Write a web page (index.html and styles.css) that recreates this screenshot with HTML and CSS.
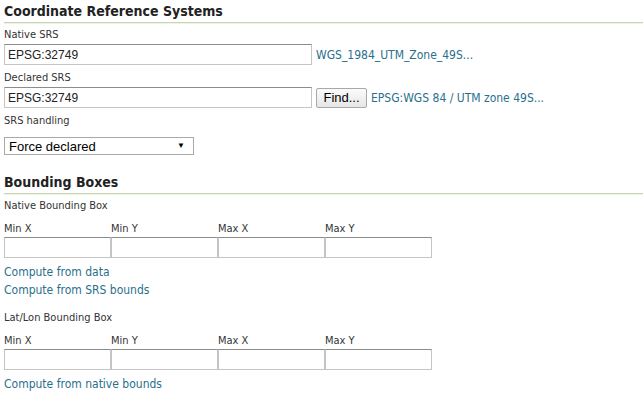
FILE: index.html
```html
<!DOCTYPE html>
<html>
<head>
<meta charset="utf-8">
<link rel="stylesheet" href="styles.css">
</head>
<body>
<section class="section">
  <h2 class="heading">Coordinate Reference Systems</h2>
  <div class="field">
    <label class="label">Native SRS</label>
    <div class="row">
      <input class="text srs" type="text" value="EPSG:32749">
      <a class="link" href="#">WGS_1984_UTM_Zone_49S...</a>
    </div>
  </div>
  <div class="field">
    <label class="label">Declared SRS</label>
    <div class="row">
      <input class="text srs" type="text" value="EPSG:32749">
      <button class="btn" type="button">Find...</button>
      <a class="link" href="#">EPSG:WGS 84 / UTM zone 49S...</a>
    </div>
  </div>
  <div class="field">
    <label class="label">SRS handling</label>
    <div class="select"><span>Force declared</span><span class="arrow">▼</span></div>
  </div>
</section>
<section class="section bb">
  <h2 class="heading">Bounding Boxes</h2>
  <div class="field">
    <label class="label">Native Bounding Box</label>
    <div class="grid">
      <span class="label cell">Min X</span><span class="label cell">Min Y</span><span class="label cell">Max X</span><span class="label cell">Max Y</span>
      <input class="text box" type="text"><input class="text box" type="text"><input class="text box" type="text"><input class="text box" type="text">
    </div>
    <div class="links">
      <a class="link" href="#">Compute from data</a>
      <a class="link" href="#">Compute from SRS bounds</a>
    </div>
  </div>
  <div class="field ll">
    <label class="label">Lat/Lon Bounding Box</label>
    <div class="grid">
      <span class="label cell">Min X</span><span class="label cell">Min Y</span><span class="label cell">Max X</span><span class="label cell">Max Y</span>
      <input class="text box" type="text"><input class="text box" type="text"><input class="text box" type="text"><input class="text box" type="text">
    </div>
    <div class="links">
      <a class="link" href="#">Compute from native bounds</a>
    </div>
  </div>
</section>
</body>
</html>
```
FILE: styles.css
```css
* { box-sizing: border-box; }
body {
  margin: 0;
  padding: 0 0 0 4px;
  background: #fff;
  font-family: "DejaVu Sans Condensed", "DejaVu Sans", Verdana, sans-serif;
  font-stretch: condensed;
  font-size: 11px;
  color: #333;
}
.heading {
  margin: 0 0 1px;
  padding-top: 3px;
  height: 23px;
  font-size: 14px;
  font-weight: bold;
  color: #222;
  line-height: 17px;
  border-bottom: 1px solid #c6d6b2;
  box-shadow: 0 1px 0 #eef4e2;
}
.field { display: flex; flex-direction: column; }
.label { display: block; line-height: 14px; height: 14px; margin: 4px 0 2px; color: #333; }
.row { display: flex; align-items: center; gap: 4px; height: 21px; margin-bottom: 2px; }
.text {
  font-family: "Liberation Sans", Arial, sans-serif;
  font-stretch: normal;
  font-size: 12px;
  color: #222;
  border: 1px solid #c4c4c4;
  border-top-color: #8c8c8c;
  background: #fff;
  padding: 0 3px;
  margin: 0;
  outline: none;
}
.srs { width: 308px; height: 21px; }
.btn {
  height: 20px;
  width: 51px;
  padding: 0;
  font-family: "Liberation Sans", Arial, sans-serif;
  font-stretch: normal;
  font-size: 13px;
  color: #000;
  background: linear-gradient(#fbfbfb, #e6e6e6);
  border: 1px solid #a8a8a8;
  border-radius: 2px;
}
.link { color: #2a6f8c; text-decoration: none; font-size: 12px; line-height: 18px; }
.select {
  margin-top: 7px;
  width: 190px;
  height: 18px;
  border: 1px solid #aaa;
  display: flex;
  align-items: center;
  justify-content: space-between;
  padding: 0 8px 0 4px;
  font-family: "Liberation Sans", Arial, sans-serif;
  font-stretch: normal;
  font-size: 13px;
  color: #000;
}
.arrow { font-size: 8px; line-height: 8px; }
.bb { margin-top: 16px; }
.grid {
  display: grid;
  grid-template-columns: repeat(4, 107px);
  width: 428px;
}
.grid .cell { margin: 7px 0 1px; }
.box { height: 21px; width: 107px; }
.links { display: flex; flex-direction: column; padding-top: 5px; }
.ll { margin-top: 8px; }
```
